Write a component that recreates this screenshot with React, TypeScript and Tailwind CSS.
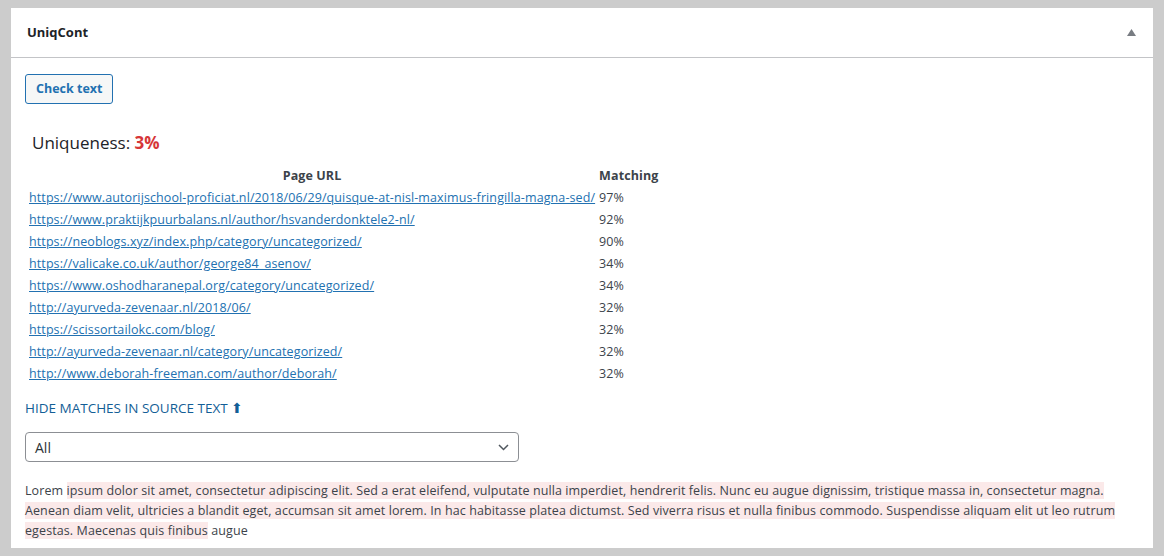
import React from "react";

const rows: [string, string][] = [
  ["https://www.autorijschool-proficiat.nl/2018/06/29/quisque-at-nisl-maximus-fringilla-magna-sed/", "97%"],
  ["https://www.praktijkpuurbalans.nl/author/hsvanderdonktele2-nl/", "92%"],
  ["https://neoblogs.xyz/index.php/category/uncategorized/", "90%"],
  ["https://valicake.co.uk/author/george84_asenov/", "34%"],
  ["https://www.oshodharanepal.org/category/uncategorized/", "34%"],
  ["http://ayurveda-zevenaar.nl/2018/06/", "32%"],
  ["https://scissortailokc.com/blog/", "32%"],
  ["http://ayurveda-zevenaar.nl/category/uncategorized/", "32%"],
  ["http://www.deborah-freeman.com/author/deborah/", "32%"],
];

export default function App() {
  return (
    <div
      className="w-[1164px] h-[556px] bg-[#cccccc] pt-[8px] pl-[11px] pr-[11px] overflow-hidden"
      style={{ fontFamily: '"Open Sans", "Noto Sans", sans-serif' }}
    >
      <div className="bg-white h-[540px] text-[#3c434a]">
        <div className="h-[50px] border-b border-[#c3c4c7] flex items-center justify-between pl-[16px] pr-[17px]">
          <span className="text-[13px] font-bold text-[#1d2327]">UniqCont</span>
          <svg width="9" height="7" viewBox="0 0 9 7">
            <path d="M4.5 0 L9 7 L0 7 Z" fill="#787c82" />
          </svg>
        </div>
        <div className="pl-[14px] pt-[16px]">
          <button className="h-[30px] px-[10px] border border-[#2271b1] rounded-[3px] bg-[#f6f7f7] text-[#2271b1] text-[12.5px] font-bold">
            Check text
          </button>
          <div className="mt-[27px] pl-[7px] text-[17px] leading-[24px] text-[#1d2327]">
            Uniqueness: <span className="text-[#d63638] font-bold">3%</span>
          </div>
          <table className="mt-[9px] ml-[1px] border-separate border-spacing-[2px] text-[12.5px] tracking-[0.1px]">
            <thead>
              <tr>
                <th className="font-bold text-center px-[1px] leading-[20px]">Page URL</th>
                <th className="font-bold text-left px-[1px] leading-[20px] pr-[1px]">Matching</th>
              </tr>
            </thead>
            <tbody>
              {rows.map(([u, m]) => (
                <tr key={u}>
                  <td className="px-[1px] leading-[20px]">
                    <a href="#" className="text-[#2271b1] underline">{u}</a>
                  </td>
                  <td className="px-[1px] leading-[20px]">{m}</td>
                </tr>
              ))}
            </tbody>
          </table>
          <div className="mt-[12px] text-[13.5px] text-[#135e96] leading-[20px]">
            HIDE MATCHES IN SOURCE TEXT ⬆
          </div>
          <div className="mt-[14px] w-[494px] h-[30px] border border-[#8c8f94] rounded-[4px] flex items-center justify-between pl-[9px] pr-[9px] text-[14px] text-[#2c3338]">
            <span>All</span>
            <svg width="11" height="7" viewBox="0 0 11 7">
              <path d="M1 1 L5.5 5.5 L10 1" stroke="#50575e" strokeWidth="1.5" fill="none" />
            </svg>
          </div>
          <p className="mt-[19px] pr-[16px] text-[12.5px] tracking-[0.1px] leading-[20px] text-[#3c434a]">
            Lorem{" "}
            <span className="bg-[#fbe9e9]">
              ipsum dolor sit amet, consectetur adipiscing elit. Sed a erat eleifend, vulputate nulla imperdiet, hendrerit felis. Nunc eu augue dignissim, tristique massa in, consectetur magna. Aenean diam velit, ultricies a blandit eget, accumsan sit amet lorem. In hac habitasse platea dictumst. Sed viverra risus et nulla finibus commodo. Suspendisse aliquam elit ut leo rutrum egestas. Maecenas quis finibus
            </span>{" "}
            augue
          </p>
        </div>
      </div>
    </div>
  );
}
